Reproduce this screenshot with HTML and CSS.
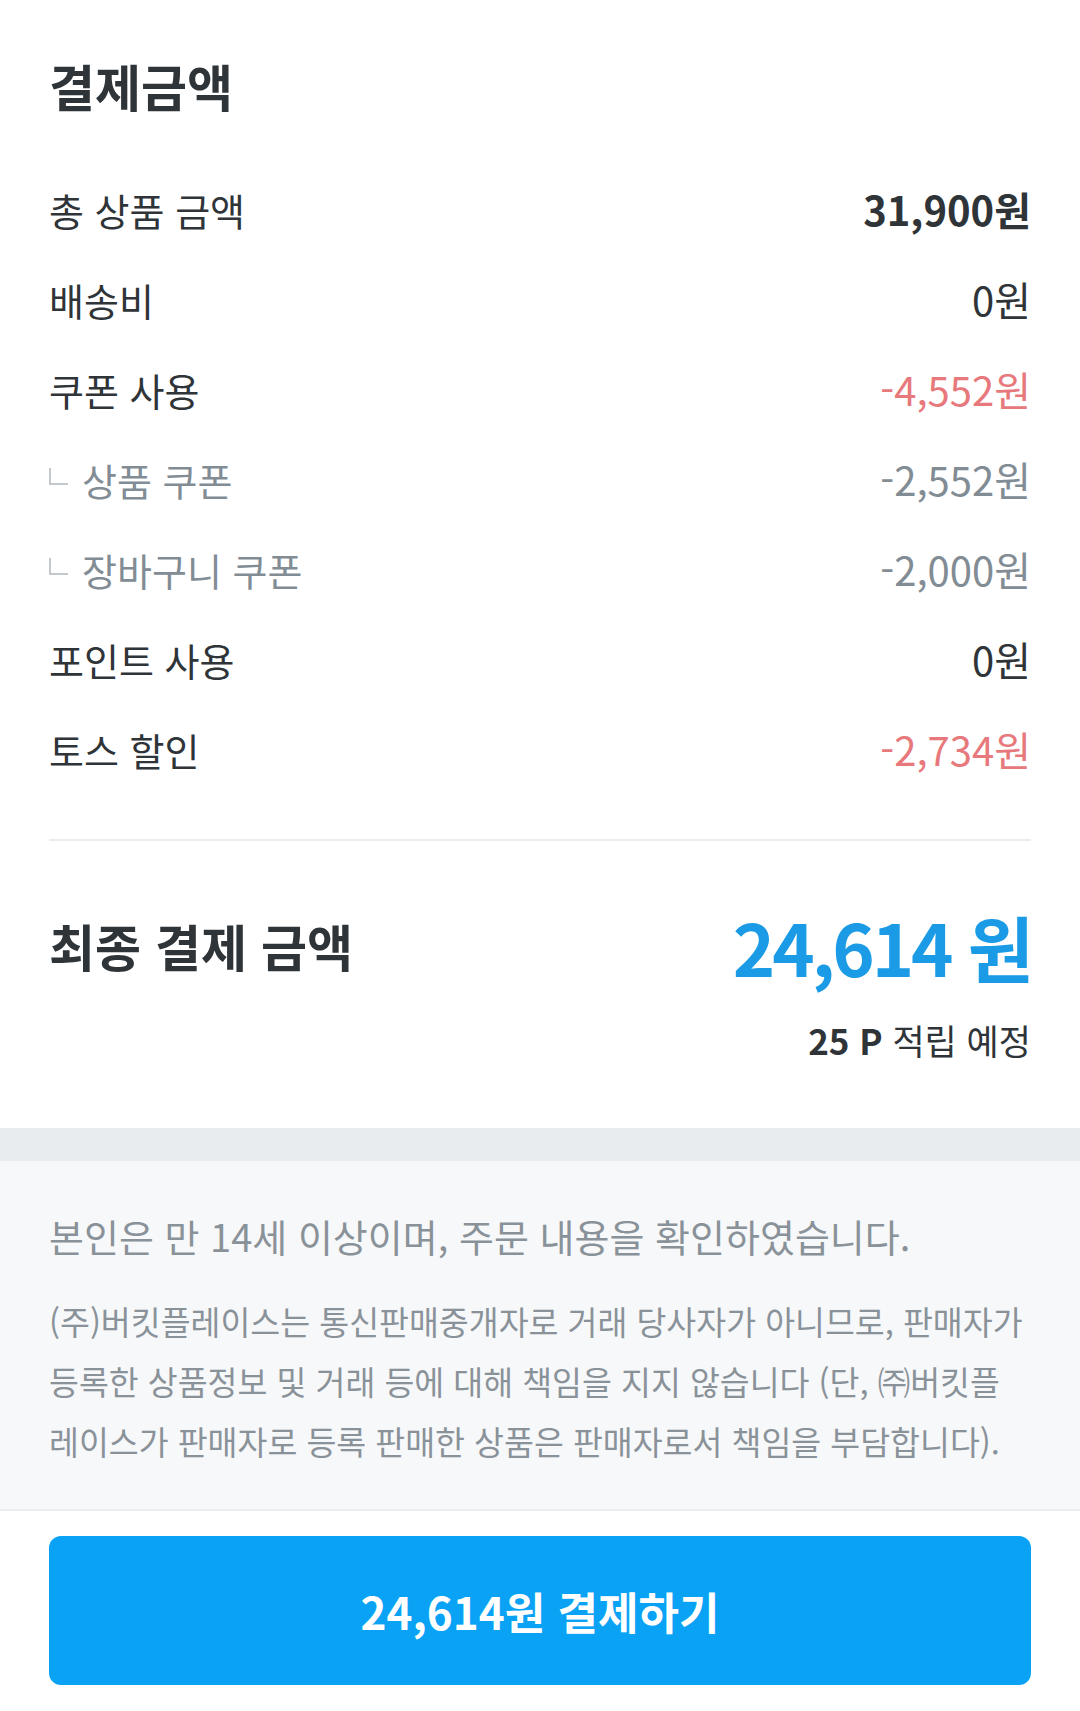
FILE: index.html
```html
<!DOCTYPE html>
<html lang="ko">

<head>
    <meta charset="UTF-8">
    <meta name="viewport" content="width=device-width, initial-scale=1.0">
    <title>결제금액</title>
    <link rel="stylesheet" href="styles.css">
</head>

<body>

    <div class="summary">
        <h2 class="title">결제금액</h2>

        <div class="rows">
            <div class="row">
                <span class="label">총 상품 금액</span>
                <span class="value bold">31,900원</span>
            </div>
            <div class="row">
                <span class="label">배송비</span>
                <span class="value">0원</span>
            </div>
            <div class="row">
                <span class="label">쿠폰 사용</span>
                <span class="value red">-4,552원</span>
            </div>
            <div class="row sub">
                <span class="label"><i class="corner"></i>상품 쿠폰</span>
                <span class="value">-2,552원</span>
            </div>
            <div class="row sub">
                <span class="label"><i class="corner"></i>장바구니 쿠폰</span>
                <span class="value">-2,000원</span>
            </div>
            <div class="row">
                <span class="label">포인트 사용</span>
                <span class="value">0원</span>
            </div>
            <div class="row">
                <span class="label">토스 할인</span>
                <span class="value red">-2,734원</span>
            </div>
        </div>

        <div class="final">
            <div class="final-row">
                <span class="final-label">최종 결제 금액</span>
                <span class="final-price">24,614 원</span>
            </div>
            <p class="point"><b>25 P</b> 적립 예정</p>
        </div>
    </div>

    <div class="band"></div>

    <div class="notice">
        <p class="agree">본인은 만 14세 이상이며, 주문 내용을 확인하였습니다.</p>
        <p class="legal">(주)버킷플레이스는 통신판매중개자로 거래 당사자가 아니므로, 판매자가 등록한 상품정보 및 거래 등에 대해 책임을 지지 않습니다 (단, ㈜버킷플<br>레이스가 판매자로 등록 판매한 상품은 판매자로서 책임을 부담합니다).</p>
    </div>

    <div class="pay">
        <button class="pay-btn">24,614원 결제하기</button>
    </div>

</body>

</html>
```

FILE: styles.css
```css
*,
*::after,
*::before {
    margin: 0;
    padding: 0;
    box-sizing: border-box;
}

body {
    background: #fff;
    font-family: "Noto Sans CJK KR", "Noto Sans", sans-serif;
    color: #2f3438;
    width: 1080px;
}

.summary {
    padding: 50px 49px 0 49px;
}

.title {
    font-size: 50px;
    font-weight: 700;
    line-height: 70px;
    margin-bottom: 44px;
}

.row {
    display: flex;
    justify-content: space-between;
    align-items: center;
    height: 90px;
}

.label {
    display: flex;
    align-items: center;
    font-size: 38px;
}

.value {
    font-size: 40px;
}

.value.bold {
    font-weight: 700;
}

.red {
    color: #e7787c;
}

.sub {
    color: #828c94;
}

.corner {
    display: inline-block;
    width: 19px;
    height: 17px;
    border-left: 2px solid #c2c8cc;
    border-bottom: 2px solid #c2c8cc;
    margin: 0 14px 6px 0;
}

.final {
    margin-top: 45px;
    border-top: 2px solid #eaedef;
    padding: 64px 0 63px;
}

.final-row {
    display: flex;
    justify-content: space-between;
    align-items: center;
    height: 80px;
}

.final-label {
    font-size: 50px;
    font-weight: 700;
}

.final-price {
    font-size: 72px;
    font-weight: 700;
    color: #1b9be6;
    letter-spacing: -3px;
}

.point {
    text-align: right;
    font-size: 35px;
    margin-top: 30px;
    line-height: 50px;
}

.point b {
    font-weight: 700;
}

.band {
    height: 33px;
    background: #e9ecef;
}

.notice {
    background: #f7f8fa;
    padding: 50px 49px 38px;
    border-bottom: 2px solid #eaedf0;
    color: #8a9299;
}

.agree {
    font-size: 38px;
    line-height: 50px;
    margin-bottom: 30px;
}

.legal {
    font-size: 32.5px;
    line-height: 60px;
}

.pay {
    padding: 25px 49px 23px;
}

.pay-btn {
    width: 100%;
    height: 149px;
    border: none;
    border-radius: 12px;
    background: #0aa2f5;
    color: #fff;
    font-family: "Noto Sans CJK KR", sans-serif;
    font-size: 44px;
    font-weight: 700;
}
```
